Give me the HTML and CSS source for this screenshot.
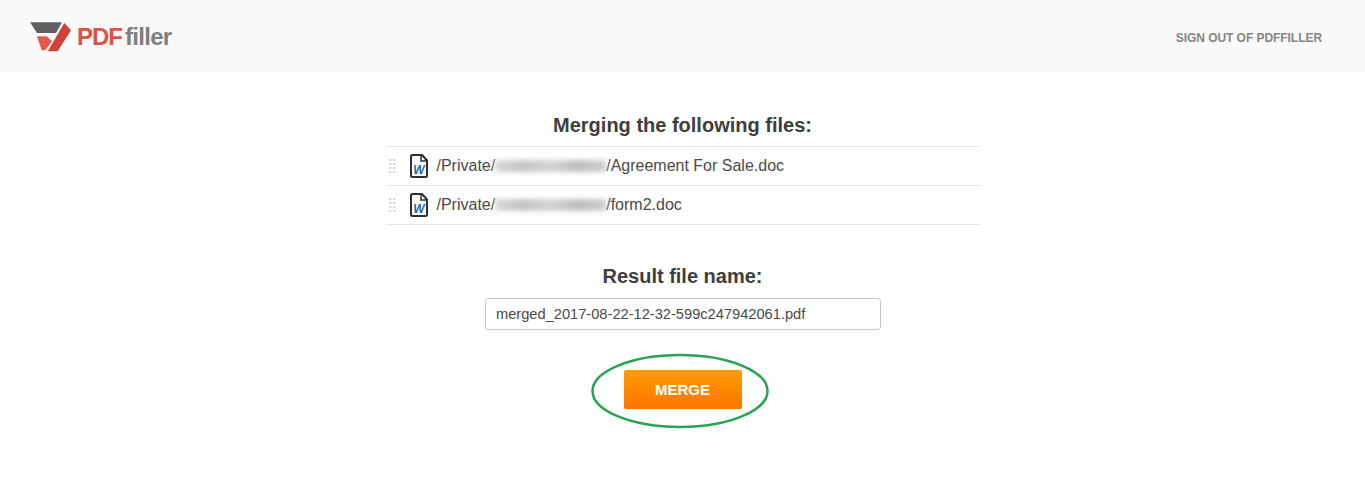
FILE: index.html
```html
<!DOCTYPE html>
<html lang="en">
<head>
<meta charset="utf-8">
<title>Merge files</title>
<link rel="stylesheet" href="styles.css">
</head>
<body>
<header class="topbar">
  <a class="logo" href="#">
    <svg class="logo-mark" viewBox="0 0 42 34" width="42" height="34" aria-hidden="true">
      <polygon points="0,2.300 32,2.300 26,13 7,13" fill="#5f5f5f"/>
      <polygon points="7,16.300 16.700,16.300 22,21.300 15.300,30.300 11.700,30.300" fill="#e8574c"/>
      <polygon points="34.300,3 41,10.300 27.700,31.300 17.700,31.300" fill="#cf4238"/>
    </svg>
    <span class="logo-text"><span class="logo-pdf">PDF</span><span class="logo-filler">filler</span></span>
  </a>
  <a class="signout" href="#">SIGN OUT OF PDFFILLER</a>
</header>
<main class="content">
  <h2 class="title">Merging the following files:</h2>
  <ul class="files">
    <li class="file">
      <span class="grip"></span>
      <svg class="doc" viewBox="0 0 18 24" width="18" height="24" aria-hidden="true">
        <path d="M2.500 1h9.500l5 5.500v15a1.500 1.500 0 0 1-1.500 1.500h-13A1.500 1.500 0 0 1 1 21.500v-19A1.500 1.500 0 0 1 2.500 1z" fill="#fff" stroke="#2b3036" stroke-width="2" stroke-linejoin="round"/>
        <path d="M11 1v6h6" fill="none" stroke="#2b3036" stroke-width="1.500"/>
        <text class="doc-w" x="9" y="20" text-anchor="middle">W</text>
      </svg>
      <span class="path">/Private/<span class="blur"></span>/Agreement For Sale.doc</span>
    </li>
    <li class="file">
      <span class="grip"></span>
      <svg class="doc" viewBox="0 0 18 24" width="18" height="24" aria-hidden="true">
        <path d="M2.500 1h9.500l5 5.500v15a1.500 1.500 0 0 1-1.500 1.500h-13A1.500 1.500 0 0 1 1 21.500v-19A1.500 1.500 0 0 1 2.500 1z" fill="#fff" stroke="#2b3036" stroke-width="2" stroke-linejoin="round"/>
        <path d="M11 1v6h6" fill="none" stroke="#2b3036" stroke-width="1.500"/>
        <text class="doc-w" x="9" y="20" text-anchor="middle">W</text>
      </svg>
      <span class="path">/Private/<span class="blur"></span>/form2.doc</span>
    </li>
  </ul>
  <h2 class="title result-title">Result file name:</h2>
  <input class="name-input" type="text" value="merged_2017-08-22-12-32-599c247942061.pdf">
  <div class="action">
    <button class="merge" type="button">MERGE</button>
    <svg class="circle" viewBox="0 0 180 76" width="180" height="76" aria-hidden="true">
      <ellipse cx="90" cy="38" rx="87.500" ry="36" fill="none" stroke="#27a354" stroke-width="2.500"/>
    </svg>
  </div>
</main>
</body>
</html>
```
FILE: styles.css
```css
* { box-sizing: border-box; }
html, body { margin: 0; padding: 0; }
body {
  height: 503px;
  overflow: hidden;
  background: #fff;
  color: #3e3e3e;
  font-family: "Liberation Sans", Arial, sans-serif;
}
.topbar {
  height: 73px;
  background: #fafafa;
  display: flex;
  align-items: center;
  justify-content: space-between;
  padding: 0 43px 0 30px;
}
.logo {
  display: flex;
  align-items: center;
  gap: 5px;
  text-decoration: none;
  margin-top: 1px;
}
.logo-mark { display: block; }
.logo-text {
  font-size: 24px;
  font-weight: 700;
}
.logo-pdf { color: #d9534a; letter-spacing: -1px; }
.logo-filler { color: #7d7f80; margin-left: 3px; letter-spacing: -0.7px; }
.signout {
  font-size: 12px;
  font-weight: 700;
  color: #858585;
  text-decoration: none;
  margin-top: 3px;
  letter-spacing: -0.05px;
}
.content {
  width: 594px;
  margin: 0 auto;
  padding-top: 40px;
  display: flex;
  flex-direction: column;
  align-items: center;
}
.title {
  margin: 0;
  font-size: 20px;
  line-height: 24px;
  font-weight: 700;
  text-align: center;
  color: #3e3e3e;
}
.files {
  list-style: none;
  margin: 9px 0 0;
  padding: 0;
  width: 100%;
  border-top: 1px solid #e6e6e6;
}
.file {
  height: 39px;
  border-bottom: 1px solid #e6e6e6;
  display: flex;
  align-items: center;
  padding-left: 3px;
}
.grip {
  width: 7px;
  height: 14px;
  margin-right: 14px;
  background-image: repeating-linear-gradient(180deg, #d8d8d8 0 2.500px, transparent 2.500px 4px), repeating-linear-gradient(180deg, #d8d8d8 0 2.500px, transparent 2.500px 4px);
  background-size: 2.500px 100%;
  background-position: 0 0, 4px 0;
  background-repeat: repeat-y;
}
.doc { display: block; margin-right: 9px; flex: none; }
.doc-w {
  font-family: "Liberation Sans", Arial, sans-serif;
  font-size: 12px;
  font-weight: 700;
  font-style: italic;
  fill: #2067ae;
}
.path { font-size: 16px; color: #4a4a4a; line-height: 20px; white-space: nowrap; display: flex; align-items: center; }
.blur {
  display: inline-block;
  width: 111px;
  height: 12px;
  background: linear-gradient(90deg, #d8d8d8 0%, #c4c4c4 25%, #d4d4d4 50%, #bebebe 75%, #cfcfcf 100%);
  filter: blur(2.500px);
}
.result-title { margin-top: 39px; }
.name-input {
  margin-top: 10px;
  width: 396px;
  height: 32px;
  padding: 0 10px 0 10.500px;
  border: 1px solid #c8c8c8;
  border-radius: 3px;
  font-family: inherit;
  font-size: 14.650px;
  color: #4a4a4a;
  background: #fff;
  outline: none;
}
.action {
  position: relative;
  margin-top: 40px;
}
.merge {
  display: block;
  width: 118px;
  height: 39px;
  border: 0;
  border-radius: 2px;
  background: linear-gradient(180deg, #ff9d00, #ff7400);
  color: #fff;
  font-family: inherit;
  font-size: 15px;
  font-weight: 700;
}
.circle {
  position: absolute;
  left: -34px;
  top: -17px;
}
```
